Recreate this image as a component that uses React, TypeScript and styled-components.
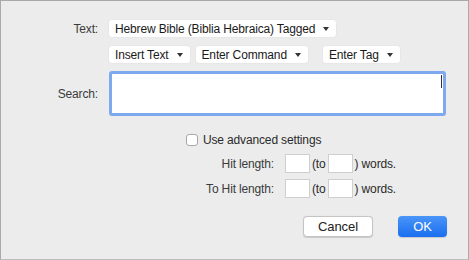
import { FC } from "react";
import styled, { createGlobalStyle } from "styled-components";

const GlobalStyle = createGlobalStyle`
    html, body {
        margin: 0;
        padding: 0;
        background: #ececec;
    }
    * {
        box-sizing: border-box;
    }
`;

const Window = styled.div`
    width: 469px;
    height: 260px;
    background: #ececec;
    border: 1px solid #a9a9a9;
    border-bottom-color: #bdbdbd;
    font-family: "Liberation Sans", Arial, sans-serif;
    font-size: 12px;
    letter-spacing: -0.15px;
    color: #262626;
    display: flex;
    flex-direction: column;
    padding-top: 19px;
`;

const FieldRow = styled.div<{ $gap?: number }>`
    display: grid;
    grid-template-columns: 97px 1fr;
    column-gap: 11px;
    align-items: center;
    margin-bottom: ${(p) => p.$gap ?? 9}px;
`;

const Label = styled.span`
    text-align: right;
    color: #3b3b3b;
`;

const Group = styled.div`
    display: flex;
    gap: 6px;
`;

const Popup = styled.div<{ $gapAfter?: number }>`
    height: 17px;
    display: inline-flex;
    align-items: center;
    gap: 8px;
    padding: 0 7px 0 6px;
    background: #fff;
    border-radius: 3px;
    box-shadow: 0 0 0 0.5px rgba(0, 0, 0, 0.04);
    color: #1a1a1a;
    white-space: nowrap;
    margin-right: ${(p) => p.$gapAfter ?? 0}px;
`;

const Caret = styled.span`
    width: 0;
    height: 0;
    border-left: 3px solid transparent;
    border-right: 3px solid transparent;
    border-top: 4px solid #333;
`;

const SearchBox = styled.div`
    width: 337px;
    height: 45px;
    margin-top: -1px;
    background: #fff;
    border: 3px solid #7fa9ee;
    border-radius: 3px;
    position: relative;
`;

const Cursor = styled.span`
    position: absolute;
    right: 1px;
    top: 1px;
    width: 1px;
    height: 13px;
    background: #333;
`;

const CheckRow = styled.label`
    display: flex;
    align-items: center;
    gap: 5px;
    margin: 17px 0 0 185px;
    height: 14px;
    color: #2a2a2a;
`;

const CheckBox = styled.span`
    width: 12px;
    height: 12px;
    background: #fff;
    border: 1px solid #a8a8a8;
    border-radius: 3px;
`;

const LengthRow = styled.div<{ $top: number }>`
    display: grid;
    grid-template-columns: 273px auto;
    column-gap: 11px;
    align-items: center;
    margin-top: ${(p) => p.$top}px;
`;

const LengthInputs = styled.div`
    display: flex;
    align-items: center;
    gap: 2px;
    color: #2a2a2a;
`;

const NumBox = styled.span`
    width: 25px;
    height: 19px;
    background: #fff;
    border: 1px solid #cfcfcf;
`;

const ButtonBar = styled.div`
    display: flex;
    justify-content: flex-end;
    gap: 25px;
    padding-right: 21px;
    margin-top: 18px;
`;

const Button = styled.button<{ $primary?: boolean }>`
    height: 21px;
    width: ${(p) => (p.$primary ? 49 : 70)}px;
    border-radius: 4px;
    font-family: inherit;
    font-size: 13px;
    letter-spacing: -0.1px;
    padding: 0;
    border: ${(p) => (p.$primary ? "none" : "1px solid #c4c4c4")};
    background: ${(p) =>
        p.$primary ? "linear-gradient(#4a95f8, #1a6ef0)" : "#fff"};
    color: ${(p) => (p.$primary ? "#fff" : "#222")};
    box-shadow: 0 0.5px 1px rgba(0, 0, 0, 0.15);
`;

const LengthField: FC<{ label: string; top: number }> = ({ label, top }) => (
    <LengthRow $top={top}>
        <Label>{label}</Label>
        <LengthInputs>
            <NumBox />
            <span>(to</span>
            <NumBox />
            <span>) words.</span>
        </LengthInputs>
    </LengthRow>
);

const App: FC = () => (
    <Window>
        <GlobalStyle />
        <FieldRow>
            <Label>Text:</Label>
            <Group>
                <Popup>
                    Hebrew Bible (Biblia Hebraica) Tagged <Caret />
                </Popup>
            </Group>
        </FieldRow>
        <FieldRow>
            <span />
            <Group>
                <Popup>
                    Insert Text <Caret />
                </Popup>
                <Popup $gapAfter={9}>
                    Enter Command <Caret />
                </Popup>
                <Popup>
                    Enter Tag <Caret />
                </Popup>
            </Group>
        </FieldRow>
        <FieldRow $gap={0}>
            <Label>Search:</Label>
            <SearchBox>
                <Cursor />
            </SearchBox>
        </FieldRow>
        <CheckRow>
            <CheckBox />
            Use advanced settings
        </CheckRow>
        <LengthField label="Hit length:" top={7} />
        <LengthField label="To Hit length:" top={6} />
        <ButtonBar>
            <Button>Cancel</Button>
            <Button $primary>OK</Button>
        </ButtonBar>
    </Window>
);

export default App;
